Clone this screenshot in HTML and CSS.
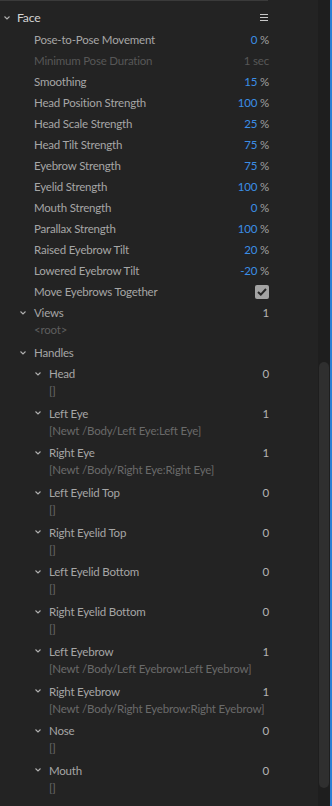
FILE: index.html
```html
<!DOCTYPE html>
<html>
<head>
<meta charset="utf-8">
<link rel="stylesheet" href="styles.css">
</head>
<body>
<div class="frame">
  <div class="content">
    <div class="topline"></div>
    <div class="row head0">
      <span class="chev"><svg width="6" height="4" viewBox="0 0 6 4"><polyline points="0.5,0.5 3,3 5.5,0.5" fill="none" stroke="#b0b0b0" stroke-width="1.1"/></svg></span>
      <span class="title">Face</span>
      <span class="menu"><svg width="8" height="7" viewBox="0 0 8 7"><rect x="0" y="0" width="8" height="1" fill="#c8c8c8"/><rect x="0" y="3" width="8" height="1" fill="#c8c8c8"/><rect x="0" y="6" width="8" height="1" fill="#c8c8c8"/></svg></span>
    </div>
    <div class="row param"><span class="label">Pose-to-Pose Movement</span><span class="val"><b>0</b> %</span></div>
    <div class="row param disabled"><span class="label">Minimum Pose Duration</span><span class="val">1 sec</span></div>
    <div class="row param"><span class="label">Smoothing</span><span class="val"><b>15</b> %</span></div>
    <div class="row param"><span class="label">Head Position Strength</span><span class="val"><b>100</b> %</span></div>
    <div class="row param"><span class="label">Head Scale Strength</span><span class="val"><b>25</b> %</span></div>
    <div class="row param"><span class="label">Head Tilt Strength</span><span class="val"><b>75</b> %</span></div>
    <div class="row param"><span class="label">Eyebrow Strength</span><span class="val"><b>75</b> %</span></div>
    <div class="row param"><span class="label">Eyelid Strength</span><span class="val"><b>100</b> %</span></div>
    <div class="row param"><span class="label">Mouth Strength</span><span class="val"><b>0</b> %</span></div>
    <div class="row param"><span class="label">Parallax Strength</span><span class="val"><b>100</b> %</span></div>
    <div class="row param"><span class="label">Raised Eyebrow Tilt</span><span class="val"><b>20</b> %</span></div>
    <div class="row param"><span class="label">Lowered Eyebrow Tilt</span><span class="val"><b>-20</b> %</span></div>
    <div class="row param"><span class="label">Move Eyebrows Together</span><span class="check"><svg width="10" height="8" viewBox="0 0 10 8"><polyline points="1,4 3.8,6.6 9,1" fill="none" stroke="#262626" stroke-width="2"/></svg></span></div>

    <div class="row head1">
      <span class="chev"><svg width="6" height="4" viewBox="0 0 6 4"><polyline points="0.5,0.5 3,3 5.5,0.5" fill="none" stroke="#b0b0b0" stroke-width="1.1"/></svg></span>
      <span class="label">Views</span><span class="count">1</span>
    </div>
    <div class="sub sub1 rootsub">&lt;root&gt;</div>

    <div class="row head1">
      <span class="chev"><svg width="6" height="4" viewBox="0 0 6 4"><polyline points="0.5,0.5 3,3 5.5,0.5" fill="none" stroke="#b0b0b0" stroke-width="1.1"/></svg></span>
      <span class="label">Handles</span>
    </div>

    <div class="item">
      <div class="row head2"><span class="chev"><svg width="6" height="4" viewBox="0 0 6 4"><polyline points="0.5,0.5 3,3 5.5,0.5" fill="none" stroke="#b0b0b0" stroke-width="1.1"/></svg></span><span class="label">Head</span><span class="count">0</span></div>
      <div class="sub sub2">[]</div>
    </div>
    <div class="item">
      <div class="row head2"><span class="chev"><svg width="6" height="4" viewBox="0 0 6 4"><polyline points="0.5,0.5 3,3 5.5,0.5" fill="none" stroke="#b0b0b0" stroke-width="1.1"/></svg></span><span class="label">Left Eye</span><span class="count">1</span></div>
      <div class="sub sub2">[Newt /Body/Left Eye:Left Eye]</div>
    </div>
    <div class="item">
      <div class="row head2"><span class="chev"><svg width="6" height="4" viewBox="0 0 6 4"><polyline points="0.5,0.5 3,3 5.5,0.5" fill="none" stroke="#b0b0b0" stroke-width="1.1"/></svg></span><span class="label">Right Eye</span><span class="count">1</span></div>
      <div class="sub sub2">[Newt /Body/Right Eye:Right Eye]</div>
    </div>
    <div class="item">
      <div class="row head2"><span class="chev"><svg width="6" height="4" viewBox="0 0 6 4"><polyline points="0.5,0.5 3,3 5.5,0.5" fill="none" stroke="#b0b0b0" stroke-width="1.1"/></svg></span><span class="label">Left Eyelid Top</span><span class="count">0</span></div>
      <div class="sub sub2">[]</div>
    </div>
    <div class="item">
      <div class="row head2"><span class="chev"><svg width="6" height="4" viewBox="0 0 6 4"><polyline points="0.5,0.5 3,3 5.5,0.5" fill="none" stroke="#b0b0b0" stroke-width="1.1"/></svg></span><span class="label">Right Eyelid Top</span><span class="count">0</span></div>
      <div class="sub sub2">[]</div>
    </div>
    <div class="item">
      <div class="row head2"><span class="chev"><svg width="6" height="4" viewBox="0 0 6 4"><polyline points="0.5,0.5 3,3 5.5,0.5" fill="none" stroke="#b0b0b0" stroke-width="1.1"/></svg></span><span class="label">Left Eyelid Bottom</span><span class="count">0</span></div>
      <div class="sub sub2">[]</div>
    </div>
    <div class="item">
      <div class="row head2"><span class="chev"><svg width="6" height="4" viewBox="0 0 6 4"><polyline points="0.5,0.5 3,3 5.5,0.5" fill="none" stroke="#b0b0b0" stroke-width="1.1"/></svg></span><span class="label">Right Eyelid Bottom</span><span class="count">0</span></div>
      <div class="sub sub2">[]</div>
    </div>
    <div class="item">
      <div class="row head2"><span class="chev"><svg width="6" height="4" viewBox="0 0 6 4"><polyline points="0.5,0.5 3,3 5.5,0.5" fill="none" stroke="#b0b0b0" stroke-width="1.1"/></svg></span><span class="label">Left Eyebrow</span><span class="count">1</span></div>
      <div class="sub sub2">[Newt /Body/Left Eyebrow:Left Eyebrow]</div>
    </div>
    <div class="item">
      <div class="row head2"><span class="chev"><svg width="6" height="4" viewBox="0 0 6 4"><polyline points="0.5,0.5 3,3 5.5,0.5" fill="none" stroke="#b0b0b0" stroke-width="1.1"/></svg></span><span class="label">Right Eyebrow</span><span class="count">1</span></div>
      <div class="sub sub2">[Newt /Body/Right Eyebrow:Right Eyebrow]</div>
    </div>
    <div class="item">
      <div class="row head2"><span class="chev"><svg width="6" height="4" viewBox="0 0 6 4"><polyline points="0.5,0.5 3,3 5.5,0.5" fill="none" stroke="#b0b0b0" stroke-width="1.1"/></svg></span><span class="label">Nose</span><span class="count">0</span></div>
      <div class="sub sub2">[]</div>
    </div>
    <div class="item">
      <div class="row head2"><span class="chev"><svg width="6" height="4" viewBox="0 0 6 4"><polyline points="0.5,0.5 3,3 5.5,0.5" fill="none" stroke="#b0b0b0" stroke-width="1.1"/></svg></span><span class="label">Mouth</span><span class="count">0</span></div>
      <div class="sub sub2">[]</div>
    </div>
  </div>
  <div class="scroll"><div class="thumb"></div></div>
  <div class="focus"></div>
</div>
</body>
</html>
```

FILE: styles.css
```css
html, body {
  margin: 0;
  padding: 0;
  background: #232323;
  overflow: hidden;
}
.frame {
  display: flex;
  width: 332px;
  height: 806px;
  overflow: hidden;
  font-family: Lato, "Open Sans", sans-serif;
  font-size: 11.5px;
  letter-spacing: -0.2px;
  color: #a6a6a6;
}
.content {
  width: 318px;
  flex: none;
  padding-top: 5px;
  box-sizing: border-box;
}
.topline {
  width: 268px;
  height: 1px;
  background: #3a3a3a;
  margin-top: -5px;
  margin-bottom: 5px;
}
.row {
  display: flex;
  align-items: center;
  height: 21px;
  padding-right: 49px;
  white-space: nowrap;
}
.chev {
  display: flex;
  align-items: center;
  flex: none;
}
.head0 {
  height: 23px;
  padding-left: 4px;
}
.head0 .chev { width: 13px; }
.title {
  flex: 1;
  font-size: 12.2px;
  color: #d2d2d2;
}
.menu {
  display: flex;
  align-items: center;
  padding-right: 1px;
}
.param { padding-left: 34px; }
.label { flex: 1; }
.val { color: #a0a0a0; }
.val b {
  font-weight: normal;
  color: #3b8ee6;
}
.disabled .label, .disabled .val { color: #575757; }
.check {
  width: 14px;
  height: 14px;
  border-radius: 2px;
  background: #a3a3a3;
  display: flex;
  align-items: center;
  justify-content: center;
}
.head1 { padding-left: 20px; }
.head1 .chev { width: 14px; }
.head2 { padding-left: 35px; }
.head2 .chev { width: 14px; }
.count {
  color: #b4b4b4;
}
.sub {
  line-height: 14px;
  color: #6a6a6a;
  white-space: nowrap;
}
.sub1 { padding-left: 34px; }
.rootsub { height: 14px; padding-bottom: 5px; color: #5e5e5e; }
.sub2 {
  padding-left: 49px;
  height: 14px;
  padding-bottom: 4.7px;
}
.scroll {
  width: 12px;
  flex: none;
  background: #1e1e1e;
  display: flex;
  flex-direction: column;
  padding-top: 362px;
  box-sizing: border-box;
  align-items: center;
}
.thumb {
  width: 10px;
  height: 426px;
  border-radius: 5px;
  background: #2f2f2f;
}
.focus {
  width: 2px;
  flex: none;
  background: #2d7fd4;
}
```
